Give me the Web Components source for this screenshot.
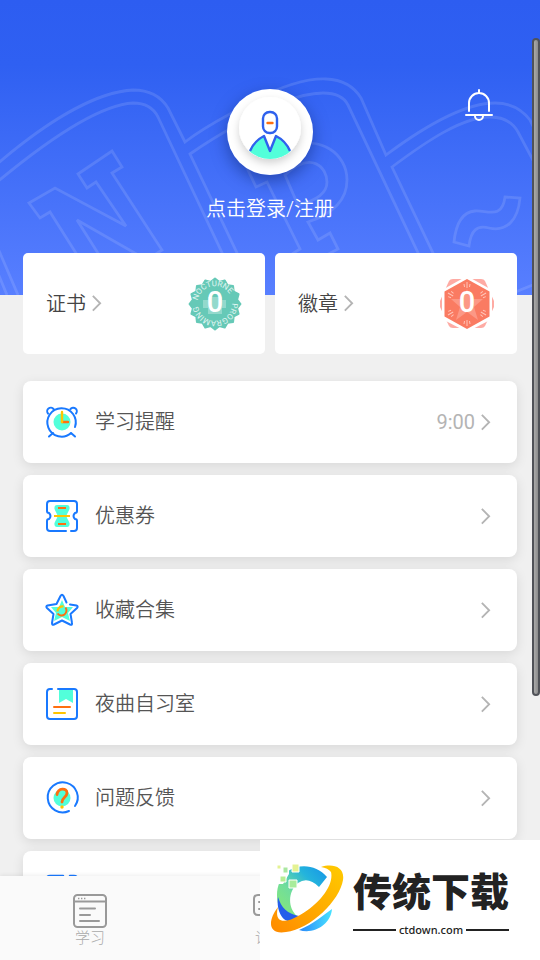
<!DOCTYPE html>
<html lang="zh-CN">
<head>
<meta charset="utf-8">
<meta name="viewport" content="width=device-width, initial-scale=1">
<title>我的</title>
<style>
  html, body { height: 100%; margin: 0; }
  body { overflow: hidden; background: #f0f0f0; font-family: Roboto, "Noto Sans CJK SC", sans-serif; color: #555; }
</style>
</head>
<body>
<app-shell>
  <profile-hero>点击登录/注册</profile-hero>
  <stat-group>
    <stat-card badge="certificate" count="0">证书</stat-card>
    <stat-card badge="medal" count="0">徽章</stat-card>
  </stat-group>
  <menu-list>
    <menu-row icon="clock" value="9:00">学习提醒</menu-row>
    <menu-row icon="coupon">优惠券</menu-row>
    <menu-row icon="star">收藏合集</menu-row>
    <menu-row icon="notebook">夜曲自习室</menu-row>
    <menu-row icon="question">问题反馈</menu-row>
    <menu-row icon="panel"></menu-row>
  </menu-list>
  <tab-bar slot="footer">
    <tab-item icon="window">学习</tab-item>
    <tab-item icon="chat">讨论</tab-item>
  </tab-bar>
  <scroll-thumb slot="overlay"></scroll-thumb>
  <site-brand slot="overlay" href="#">传统下载<span slot="domain">ctdown.com</span></site-brand>
</app-shell>

<script>
const define = (name, html, setup) => {
  const template = document.createElement('template');
  template.innerHTML = html;
  customElements.define(name, class extends HTMLElement {
    constructor() {
      super();
      this.attachShadow({ mode: 'open' }).append(template.content.cloneNode(true));
    }
    connectedCallback() { if (setup) setup(this, this.shadowRoot); }
  });
};

const icons = {
  chevron: ['0 0 12 18', '<path d="M2 1l8 8-8 8" fill="none" stroke="#b4b4b4" stroke-width="2"/>'],
  bell: ['0 0 30 34', `<g fill="none" stroke="#fff" stroke-width="2" stroke-linecap="round" stroke-linejoin="round">
    <path d="M15 1v3M5 22V14a10 10 0 0 1 20 0v8M2 26h26M11 27a4 4 0 0 0 8 0"/></g>`],
  avatar: ['0 0 86 86', `<defs><filter id="s" x="-30%" y="-30%" width="160%" height="170%"><feDropShadow dx="0" dy="4" stdDeviation="4" flood-opacity=".18"/></filter>
    <clipPath id="c"><circle cx="43" cy="39" r="31"/></clipPath></defs>
    <circle cx="43" cy="43" r="43" fill="#fff"/><circle cx="43" cy="39" r="31" fill="#fff" filter="url(#s)"/>
    <g clip-path="url(#c)"><path d="M21 66C24 56 30 50 37 47l6 14 6-14c7 3 13 9 16 19v8H21z" fill="#52ffda"/>
    <path d="M23 62c3-7 8-12 14-15l6 15 6-15c6 3 11 8 14 15" fill="none" stroke="#2f61ed" stroke-width="2.4" stroke-linejoin="round"/></g>
    <rect x="36" y="23" width="14" height="21" rx="6.5" fill="#fff" stroke="#2f61ed" stroke-width="2.4"/>
    <path d="M40.500 34h5" stroke="#ff6f10" stroke-width="2.4" stroke-linecap="round"/>`],
  clock: ['0 0 32 32', `<circle cx="16" cy="16" r="8.500" fill="#52ffda"/><g fill="none" stroke="#1979ff" stroke-width="2" stroke-linecap="round">
    <path d="M25 27A14.200 14.200 0 1 1 29 21M7 27l-4 3.500M25 27l4 3.500M2 7.500A3.500 3.500 0 1 1 7.500 3M24.500 3A3.500 3.500 0 1 1 30 7.500"/></g>
    <path d="M22 16h-6" stroke="#ff6f10" stroke-width="2.400" stroke-linecap="round"/><path d="M16 6v10" stroke="#ffc400" stroke-width="2.400" stroke-linecap="round"/>`],
  coupon: ['0 0 32 32', `<path d="M11 5h10q3 0 2.500 4c-1 3-3 5-3 7s2 4 3 7q.5 4-2.500 4H11q-3 0-2.500-4c1-3 3-5 3-7s-2-4-3-7Q8 5 11 5z" fill="#52ffda"/>
    <path d="M20 31H4q-3 0-3-3v-7q0-2 2-2 3-3 0-6-2 0-2-2V4q0-3 3-3h24q3 0 3 3v7q0 2-2 2-3 3 0 6 2 0 2 2v7q0 3-3 3h-3" fill="none" stroke="#1979ff" stroke-width="2" stroke-linecap="round"/>
    <path d="M12 8h8M12 24h8" stroke="#ff6f10" stroke-width="2"/><path d="M8 16h16" stroke="#ffc400" stroke-width="2"/>`],
  star: ['0 0 32 32', `<path d="M16 6l3 7 8 0-5 6 2 8-8-4-8 4 2-8-5-6 8 0z" fill="#52ffda"/>
    <path d="M20.500 8.500L17.500 2q-1.500-2.500-3 0L10.500 10l-9 1.500q-2 .8-.5 2.500l6.500 6-1.500 9q0 2.500 2 1.500l8-4 8 4q2.500 1 2-1.500l-1.500-9 6.500-6q1.500-1.800-.5-2.500L24 10.500" fill="none" stroke="#1979ff" stroke-width="2" stroke-linecap="round" stroke-linejoin="round"/>
    <path d="M11.500 17.500a5 5 0 0 1 6-5" fill="none" stroke="#ffc400" stroke-width="2.200"/><path d="M19.500 13.500a5 5 0 1 1-8 6" fill="none" stroke="#ff6f10" stroke-width="2"/>`],
  notebook: ['0 0 32 32', `<path d="M13 2h14v13l-7-4-7 4z" fill="#52ffda"/>
    <path d="M6 1H4Q1 1 1 4v24q0 3 3 3h24q3 0 3-3V4q0-3-3-3H12" fill="none" stroke="#1979ff" stroke-width="2" stroke-linecap="round"/>
    <path d="M8 19h16" stroke="#ff6f10" stroke-width="2" stroke-linecap="round"/><path d="M8 25h11" stroke="#ffc400" stroke-width="2" stroke-linecap="round"/>`],
  question: ['0 0 32 32', `<circle cx="16" cy="16" r="8.500" fill="#52ffda"/><path d="M23 29A15 15 0 1 1 29 24" fill="none" stroke="#1979ff" stroke-width="2" stroke-linecap="round"/>
    <path d="M11 12.500c1-7 10-7 10-1.500 0 4-5 4.500-5 9" fill="none" stroke="#ff6f10" stroke-width="2.800" stroke-linecap="round"/><circle cx="16" cy="25" r="1.700" fill="#ffc400"/>`],
  panel: ['0 0 32 32', `<path d="M17 0H4Q1 0 1 3v25q0 3 3 3h24q3 0 3-3V3q0-3-3-3h-4" fill="none" stroke="#1979ff" stroke-width="2.500" stroke-linecap="round"/>`],
  window: ['0 0 34 34', `<g fill="none" stroke="#999" stroke-width="2" stroke-linecap="round"><rect x="1" y="1" width="32" height="32" rx="3.500"/><path d="M1 7.500h32M7 14.500h15M7 21h10M7 27h19"/></g><path d="M5 4.500h1.400M8 4.500h1.400M11 4.500h1.400" stroke="#999" stroke-width="1.500"/>`],
  chat: ['0 0 34 34', `<g fill="none" stroke="#999" stroke-width="2" stroke-linecap="round"><path d="M5 1h24q4 0 4 4v12q0 4-4 4H5q-4 0-4-4V5q0-4 4-4zM6 8h12M6 15h9"/></g>`]
};

define('ui-icon', `<style>:host{display:block;flex:none;width:32px}svg{display:block;width:100%;overflow:visible}</style><svg aria-hidden="true"></svg>`,
  (el, root) => {
    const [box, shapes] = icons[el.getAttribute('name')];
    const svg = root.querySelector('svg');
    svg.setAttribute('viewBox', box);
    svg.innerHTML = shapes;
  });

define('app-shell', `<style>
  :host{display:flex;flex-direction:column;height:100vh;position:relative;overflow:hidden}
  main{flex:1;min-height:0;overflow:hidden}
</style><main><slot></slot></main><slot name="footer"></slot><slot name="overlay"></slot>`);

define('profile-hero', `<style>
  :host{display:block;position:relative;background:linear-gradient(#2d5df1,#2f60f2 22%,#587fff);padding-bottom:70px;color:#fff}
  .art{position:absolute;inset:0;width:100%;height:100%}
  .content{position:relative;display:grid;grid-template-columns:1fr auto 1fr;padding-top:89px;row-gap:18px}
  button{border:0;padding:0;background:none;color:inherit;font:inherit;cursor:pointer}
  .face{grid-column:2;justify-self:center;border-radius:50%;box-shadow:0 6px 16px #0a226a80}
  .face ui-icon{width:86px}
  .bell{grid-column:3;justify-self:end;align-self:start;margin-right:46px}
  .bell ui-icon{width:30px}
  .login{grid-column:2;grid-row:2;font-size:20px;line-height:32px;font-weight:350}
</style>
<svg class="art" viewBox="0 0 540 295" preserveAspectRatio="xMidYMid slice" fill="none" stroke="#fff" stroke-opacity=".12" stroke-width="2.800" aria-hidden="true">
  <path d="M-4 165C45 123 95 92 133 90Q157 90 168 108L185 142Q202 129 230 114C265 93 300 78 326 79Q350 80 361 98L386 155C425 126 465 103 495 103Q517 103 530 120L545 150"/>
  <path d="M-4 183C50 138 99 105 133 103Q151 103 158 117L242 295M257 295L190 154Q210 140 235 126C265 109 297 93 323 93Q342 93 348 105L438 295M453 295L392 167C428 140 463 117 490 117Q510 117 518 132L545 183"/>
  <path d="M98 288L50 212L40 218L29 203L55 188L126 226L96 182L87 188L78 174L112 151L122 167L112 173L162 250L147 260L77 220L120 288M-3 246L18 295M-3 271L7 295M508 295L540 282"/>
  <path d="M248 170L290 148C320 134 347 154 347 180Q347 209 308 222L318 240L330 233L338 249L285 277L278 263L300 249L267 182L256 187ZM285 175C312 150 327 168 327 182Q327 198 298 205Z"/>
  <path d="M505 197L520 198C518 221 506 232 489 228C477 225 471 230 469 246L454 242C456 223 462 212 475 211C487 210 502 220 505 197Z"/>
</svg>
<div class="content">
  <button class="face" aria-label="头像"><ui-icon name="avatar"></ui-icon></button>
  <button class="bell" aria-label="消息通知"><ui-icon name="bell"></ui-icon></button>
  <button class="login"><slot></slot></button>
</div>`);

define('stat-group', `<style>:host{position:relative;display:grid;grid-template-columns:1fr 1fr;gap:10px;margin:-42px 23px 0}</style><slot></slot>`);

const ticks = Array.from({ length: 6 }, (_, i) => `<path transform="rotate(${i * 60} 27 27)" d="M27 5v6M24 7l.5 3M30 7l-.5 3"/>`).join('');
const scallops = Array.from({ length: 32 }, (_, i) => {
  const a = i * Math.PI / 16, r = i % 2 ? 22.500 : 25.500;
  return `${(27 + r * Math.sin(a)).toFixed(2)},${(27 - r * Math.cos(a)).toFixed(2)}`;
}).join(' ');
const badges = {
  certificate: `<polygon points="${scallops}" fill="#66c9b7" stroke="#66c9b7" stroke-width="2" stroke-linejoin="round"/>
    <path d="M20 20h14v3h4v8h-4v6H20v-6h-5v-8h5z" fill="#93d9cc"/>
    <path id="top" d="M9.700 23.500A17.500 17.500 0 0 1 44.300 24.500" fill="none"/>
    <path id="low" d="M44 26A17 17 0 1 1 10.100 25" fill="none"/>
    <g font-size="8" fill="#e0f5f1"><text><textPath href="#top">NOCTURNE</textPath></text><text><textPath href="#low">PROGRAMING</textPath></text></g>`,
  medal: `<g fill="#feaba4"><path d="M9 4Q10 2 13 2h28q3 0 4 2l9 20q1 3 0 6l-9 19q-1 2-4 2H13q-3 0-4-2L0 30q-1-3 0-6z"/></g>
    <path d="M27-1l25 14v29L27 55 2 42V13z" fill="#fff"/><path d="M27 2l22.500 12.500v25L27 52 4.500 39.500v-25z" fill="#fa7b62"/>
    <path d="M27 12l4 10h12l-9 8 4 13-11-8-11 8 4-13-9-8h12z" fill="#fc9885"/>
    <g stroke="#ffc4b8" stroke-width="1" fill="none">${ticks}</g>`
};
define('stat-card', `<style>
  :host{display:block;min-width:0}
  button{display:flex;align-items:center;width:100%;border:0;border-radius:5px;background:#fff;padding:23px;font:inherit;color:#444;cursor:pointer}
  .title{font-size:20px;line-height:32px;margin-right:5px;font-weight:350;padding-top:1px}
  ui-icon{width:11px;margin-right:auto}
  .badge{position:relative;display:grid;place-items:center;width:54px;height:55px}
  svg{grid-area:1/1;width:54px;height:54px}
  b{position:relative;grid-area:1/1;font:500 29px/32px Roboto,sans-serif;color:#fff;margin-bottom:4px}
</style><button><span class="title"><slot></slot></span><ui-icon name="chevron"></ui-icon><span class="badge"><svg viewBox="0 0 54 54" aria-hidden="true"></svg><b></b></span></button>`,
  (el, root) => {
    root.querySelector('svg').innerHTML = badges[el.getAttribute('badge')];
    root.querySelector('b').textContent = el.getAttribute('count');
  });

define('menu-list', `<style>:host{display:grid;gap:12px;margin:27px 23px 12px}</style><slot></slot>`);

define('menu-row', `<style>
  :host{display:block}
  button{display:flex;align-items:center;width:100%;height:82px;border:0;border-radius:8px;background:#fff;box-shadow:0 3px 12px #0000001a;padding:0 26px 0 23px;font:inherit;font-size:20px;line-height:32px;color:#555;cursor:pointer}
  .label{margin-left:17px;margin-right:auto;font-weight:350}
  .value{color:#b4b4b4;margin-right:5px}
  .go{width:11px}
</style><button><span class="art"></span><span class="label"><slot></slot></span><span class="value"></span><ui-icon class="go" name="chevron"></ui-icon></button>`,
  (el, root) => {
    const art = document.createElement('ui-icon');
    art.setAttribute('name', el.getAttribute('icon'));
    root.querySelector('.art').replaceWith(art);
    root.querySelector('.value').textContent = el.getAttribute('value') || '';
  });

define('tab-bar', `<style>:host{position:relative;display:grid;grid-template-columns:repeat(3,1fr);background:#fafafa;box-shadow:0 -1px 4px #00000012}</style><slot></slot>`);

define('tab-item', `<style>
  :host{display:block}
  button{display:flex;flex-direction:column;align-items:center;width:100%;border:0;background:none;padding:18px 0 12px;font:inherit;font-size:15px;line-height:20px;font-weight:300;color:#aaa;cursor:pointer}
  ui-icon{width:34px}
</style><button><span class="art"></span><slot></slot></button>`,
  (el, root) => {
    const art = document.createElement('ui-icon');
    art.setAttribute('name', el.getAttribute('icon'));
    root.querySelector('.art').replaceWith(art);
  });

define('scroll-thumb', `<style>:host{position:absolute;top:38px;right:0;width:8px;height:658px;box-sizing:border-box;border:2px solid #505258;border-radius:4px;background:linear-gradient(90deg,#aaa,#8c8c8c)}</style>`);

define('site-brand', `<style>
  :host{position:absolute;right:0;bottom:0;width:280px;height:120px;background:#fff}
  a{display:flex;align-items:center;height:100%;box-sizing:border-box;padding:0 31px 0 9px;gap:8px;color:#222;text-decoration:none}
  svg{flex:none;width:76px;height:72px}
  .words{flex:1;display:grid;padding-top:4px}
  .name{font:900 39px/48px "Noto Sans CJK SC",sans-serif;white-space:nowrap}
  .domain{display:flex;align-items:center;gap:3px;font:500 11px/18px "Noto Sans","Noto Sans CJK SC",sans-serif;padding-top:8px}
  .domain::before,.domain::after{content:"";flex:1;height:2px;background:#222}
</style>
<a href="#"><svg viewBox="0 0 76 72" aria-hidden="true">
  <defs>
    <linearGradient id="g1" x1="0" y1="1" x2="1" y2="0"><stop stop-color="#8ceb70"/><stop offset=".4" stop-color="#70dd9c"/><stop offset=".7" stop-color="#24b4dc"/><stop offset="1" stop-color="#1593e9"/></linearGradient>
    <linearGradient id="g2" x1="1" y1="0" x2="0" y2="1"><stop stop-color="#ffcb00"/><stop offset="1" stop-color="#ff8a00"/></linearGradient>
    <linearGradient id="g3"><stop stop-color="#2987fa"/><stop offset="1" stop-color="#48e2ff"/></linearGradient>
  </defs>
  <path d="M58 13C48 1 31-1 19 7C5 18 4 42 18 56L29 53C17 43 20 26 29 19Q39 12 50 23Z" fill="url(#g1)"/>
  <path d="M9 33C7 47 14 58 21 57L30 52C18 50 12 43 9 33Z" fill="#255eea"/>
  <path d="M30 66C45 71 62 60 63 45C54 51 45 60 30 66Z" fill="url(#g3)"/>
  <path d="M52 3C64-1 76 3 74 16C71 36 42 65 17 68C-2 71-1 56 9 43C5 58 14 61 31 51C52 39 65 20 62 8Q59 4 52 3Z" fill="url(#g2)"/>
  <path d="M5 0h15v10L14 20H5z" fill="#fff"/>
  <g stroke="#fff" stroke-width="1"><path d="M23 0h7v8h-7z" fill="#e4f293"/><path d="M8 1h4v4H8z" fill="#e4f293"/><path d="M14 3h5v6h-5z" fill="#aae7a0"/><path d="M11 12h6v6h-6z" fill="#b6ed94"/><path d="M20 16h8v8h-8z" fill="#a8ec9b"/></g>
</svg>
<span class="words"><span class="name"><slot></slot></span><span class="domain"><slot name="domain"></slot></span></span></a>`,
  (el, root) => root.querySelector('a').setAttribute('href', el.getAttribute('href')));
</script>
</body>
</html>
